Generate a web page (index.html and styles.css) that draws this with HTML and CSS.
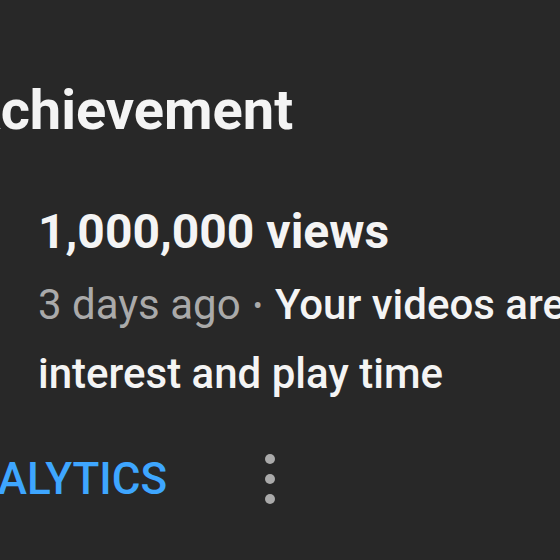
FILE: index.html
```html
<!DOCTYPE html>
<html lang="en">
<head>
    <meta charset="UTF-8">
    <meta name="viewport" content="width=device-width, initial-scale=1.0">
    <title>Notifications</title>
    <link rel="stylesheet" href="styles.css">
</head>
<body>
    <main class="panel">
        <h1 class="panel-title">Achievement</h1>

        <article class="notice">
            <h2 class="notice-title">1,000,000 views</h2>
            <p class="notice-text">
                <span class="notice-time">3 days ago</span>
                <span class="notice-dot">•</span>
                Your videos are getting more attention,<br>interest and play time
            </p>
        </article>

        <div class="notice-actions">
            <div class="action-link">ANALYTICS</div>
            <div class="action-more">
                <svg width="20" height="60" viewBox="0 0 20 60">
                    <circle cx="10" cy="10" r="5"></circle>
                    <circle cx="10" cy="30" r="5"></circle>
                    <circle cx="10" cy="50" r="5"></circle>
                </svg>
            </div>
        </div>
    </main>
</body>
</html>
```

FILE: styles.css
```css
:root {
    --bg: #282828;
    --text: #f4f4f4;
    --muted: #aaaaaa;
    --link: #3ea6ff;
}

* {
    margin: 0;
    padding: 0;
    box-sizing: border-box;
}

body {
    background: var(--bg);
    color: var(--text);
    font-family: Roboto, 'Noto Sans', sans-serif;
    overflow: hidden;
    width: 560px;
    height: 560px;
}

/* 面板 */
.panel {
    margin-left: -37px;
    padding-top: 77px;
    width: 1100px;
}

.panel-title {
    font-size: 56px;
    font-weight: 700;
    line-height: 67px;
}

/* 通知 */
.notice {
    padding: 59px 0 0 75px;
}

.notice-title {
    font-size: 48px;
    font-weight: 700;
    line-height: 58px;
}

.notice-text {
    margin-top: 10px;
    font-size: 42px;
    font-weight: 500;
    line-height: 68px;
    white-space: nowrap;
}

.notice-time,
.notice-dot {
    color: var(--muted);
    font-weight: 400;
}

.notice-dot {
    font-size: 28px;
    vertical-align: 4px;
    margin: 0 2px;
}

/* 操作 */
.notice-actions {
    display: flex;
    align-items: center;
    margin-top: 41px;
}

.action-link {
    color: var(--link);
    font-size: 44px;
    font-weight: 500;
    margin-left: -26px;
}

.action-more {
    margin-left: 93px;
    display: flex;
}

.action-more svg {
    fill: var(--muted);
}
```
